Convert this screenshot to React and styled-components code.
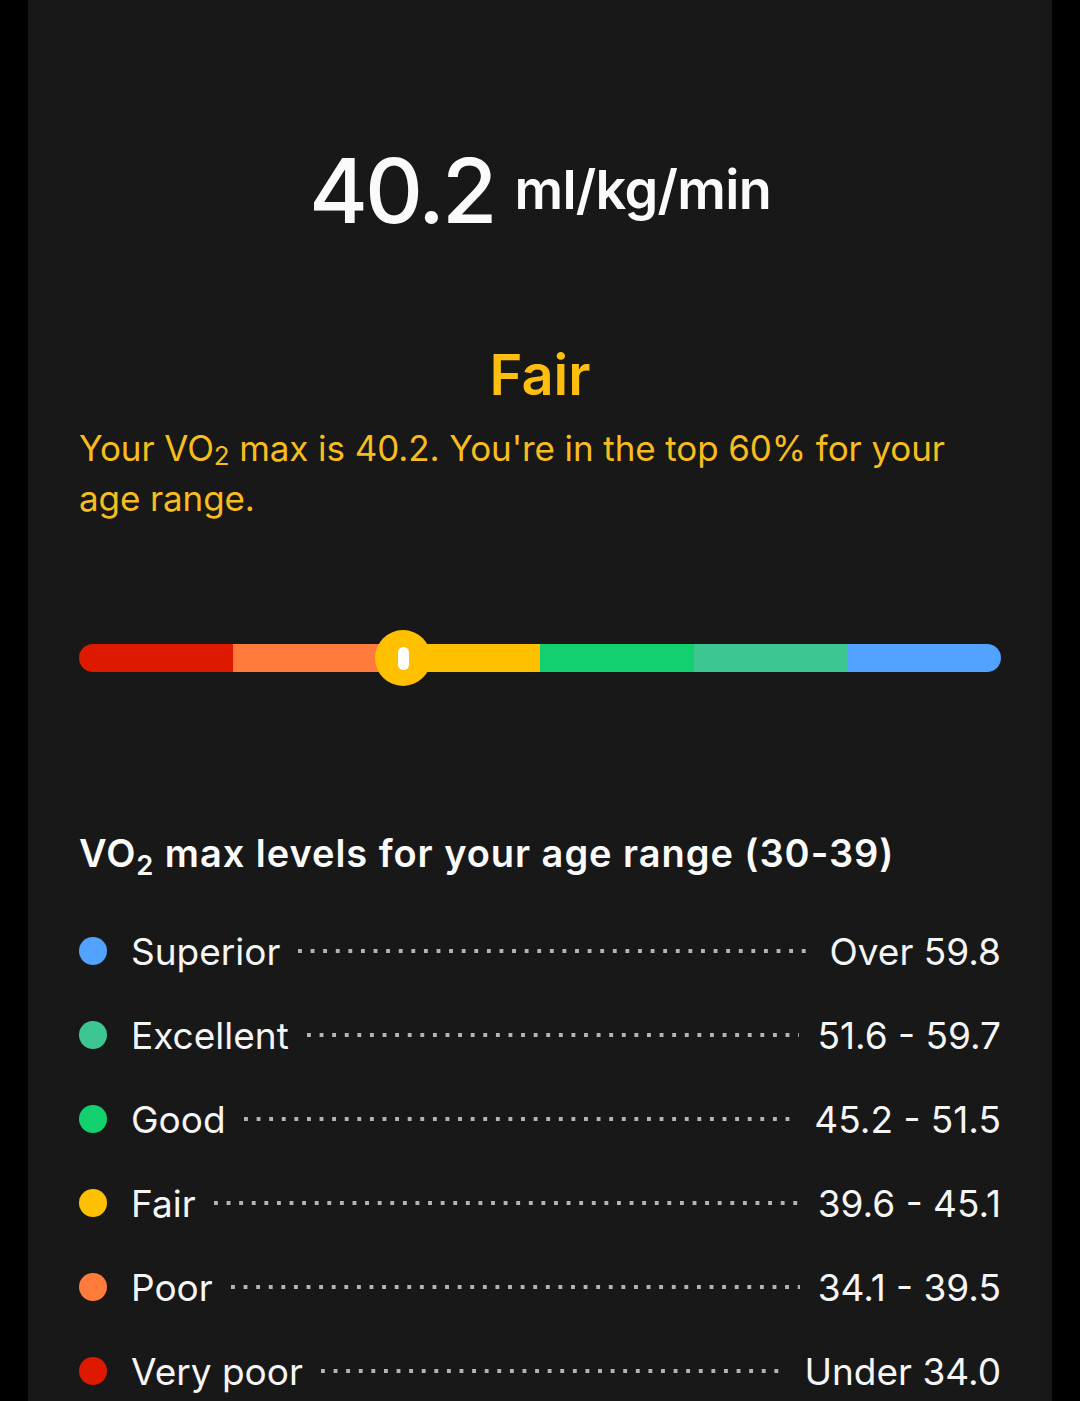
import React from 'react';
import styled, { createGlobalStyle } from 'styled-components';

const GlobalStyle = createGlobalStyle`
  html, body {
    margin: 0;
    padding: 0;
    background: #000;
  }
  body {
    font-family: Inter, "Noto Sans", sans-serif;
    -webkit-font-smoothing: antialiased;
  }
`;

const Card = styled.main`
  width: 1024px;
  min-height: 1401px;
  margin: 0 auto;
  padding: 135px 51px 0;
  box-sizing: border-box;
  background: #181818;
  color: #fafafa;
`;

const Value = styled.div`
  text-align: center;
  line-height: 110px;
  height: 110px;
  white-space: nowrap;
`;

const Number = styled.span`
  font-size: 90px;
  font-weight: 500;
  letter-spacing: -3px;
`;

const Unit = styled.span`
  font-size: 54px;
  font-weight: 600;
  margin-left: 20px;
  vertical-align: 14px;
  letter-spacing: -0.7px;
`;

const Status = styled.h2`
  margin: 95px 0 0;
  text-align: center;
  font-size: 56px;
  line-height: 70px;
  font-weight: 600;
  color: #fdbe10;
`;

const Summary = styled.p`
  margin: 13px 0 0;
  font-size: 35px;
  line-height: 50px;
  font-weight: 400;
  letter-spacing: -0.1px;
  color: #f7bd1d;
`;

const Sub = styled.span`
  font-size: ${p => p.$size};
  vertical-align: ${p => p.$drop};
  line-height: 0;
`;

const Scale = styled.div`
  position: relative;
  margin-top: 107px;
  height: 56px;
  display: flex;
  align-items: center;
`;

const Track = styled.div`
  flex: 1;
  display: flex;
  height: 28px;
  border-radius: 14px;
  overflow: hidden;
`;

const Segment = styled.div`
  flex: 1;
  background: ${p => p.$color};
`;

const Thumb = styled.div`
  position: absolute;
  top: 0;
  width: 56px;
  height: 56px;
  margin-left: -28px;
  border-radius: 50%;
  background: ${p => p.$color};
  display: flex;
  align-items: center;
  justify-content: center;

  &::after {
    content: '';
    width: 11px;
    height: 23px;
    border-radius: 6px;
    background: #fff;
  }
`;

const Heading = styled.h3`
  margin: 142px 0 0;
  font-size: 38px;
  line-height: 50px;
  font-weight: 600;
  letter-spacing: 0.95px;
  color: #fafafa;
`;

const List = styled.ul`
  list-style: none;
  margin: 31px 0 0;
  padding: 0;
`;

const Row = styled.li`
  display: flex;
  align-items: center;
  height: 84px;
  font-size: 37px;
  color: #f5f5f5;
`;

const Dot = styled.span`
  width: 28px;
  height: 28px;
  border-radius: 50%;
  background: ${p => p.$color};
  flex-shrink: 0;
  margin-right: 24px;
`;

const Leader = styled.span`
  flex: 1;
  height: 4px;
  margin: 0 18px;
  background-image: linear-gradient(to right, #b4b4b4 4px, transparent 4px);
  background-size: 12.6px 4px;
  background-repeat: repeat-x;
`;

const levels = [
  { name: 'Very poor', range: 'Under 34.0', min: 0, max: 34.0, color: '#dd1a00' },
  { name: 'Poor', range: '34.1 - 39.5', min: 34.1, max: 39.5, color: '#ff7b3b' },
  { name: 'Fair', range: '39.6 - 45.1', min: 39.6, max: 45.1, color: '#ffc000' },
  { name: 'Good', range: '45.2 - 51.5', min: 45.2, max: 51.5, color: '#12d06e' },
  { name: 'Excellent', range: '51.6 - 59.7', min: 51.6, max: 59.7, color: '#3dc692' },
  { name: 'Superior', range: 'Over 59.8', min: 59.8, max: 70, color: '#52a2ff' },
];

const VALUE = 40.2;

const thumbPosition = (v) => {
  const i = levels.findIndex(l => v >= l.min && v <= l.max);
  const l = levels[i];
  return ((i + (v - l.min) / (l.max - l.min)) / levels.length) * 100;
};

const App = () => {
  const current = levels.find(l => VALUE >= l.min && VALUE <= l.max);

  return (
    <>
      <GlobalStyle />
      <Card>
        <Value>
          <Number>{VALUE}</Number>
          <Unit>ml/kg/min</Unit>
        </Value>
        <Status>{current.name}</Status>
        <Summary>
          Your VO<Sub $size="0.74em" $drop="-0.14em">2</Sub> max is {VALUE}. You're in the top 60% for your age range.
        </Summary>

        <Scale>
          <Track>
            {levels.map(l => <Segment key={l.name} $color={l.color} />)}
          </Track>
          <Thumb $color={current.color} style={{ left: `${thumbPosition(VALUE)}%` }} />
        </Scale>

        <Heading>
          VO<Sub $size="0.72em" $drop="-0.3em">2</Sub> max levels for your age range (30-39)
        </Heading>
        <List>
          {[...levels].reverse().map(l => (
            <Row key={l.name}>
              <Dot $color={l.color} />
              <span>{l.name}</span>
              <Leader />
              <span>{l.range}</span>
            </Row>
          ))}
        </List>
      </Card>
    </>
  );
};

export default App;
